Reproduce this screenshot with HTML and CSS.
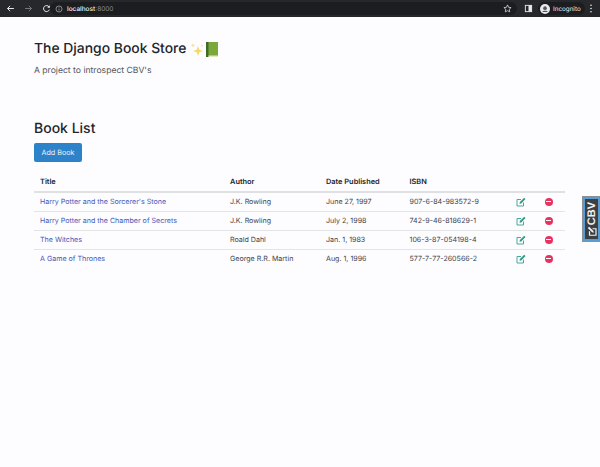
FILE: index.html
```html
<!DOCTYPE html>
<html lang="en">
<head>
<meta charset="utf-8">
<title>The Django Book Store</title>
<link rel="stylesheet" href="styles.css">
</head>
<body>
<header class="chrome">
  <div class="nav-icons">
    <svg class="ico" viewBox="0 0 12 12"><path d="M10.500 6H2M5.500 2.500 2 6l3.500 3.500" fill="none" stroke="#e8eaed" stroke-width="1.300"/></svg>
    <svg class="ico" viewBox="0 0 12 12"><path d="M1.500 6H10M6.500 2.500 10 6 6.500 9.500" fill="none" stroke="#77787b" stroke-width="1.300"/></svg>
    <svg class="ico" viewBox="0 0 12 12"><path d="M9.800 7.500A4 4 0 1 1 9.300 3.800" fill="none" stroke="#e8eaed" stroke-width="1.300"/><path d="M10.500 1.500v3.500H7z" fill="#e8eaed"/></svg>
  </div>
  <div class="omnibox">
    <svg class="info" viewBox="0 0 10 10"><circle cx="5" cy="5" r="3.800" fill="none" stroke="#c4c5c8" stroke-width=".8"/><path d="M5 4.500v2.500M5 3v.8" stroke="#c4c5c8" stroke-width=".8"/></svg>
    <span class="host">localhost</span><span class="port">:8000</span>
    <svg class="star" viewBox="0 0 10 10"><path d="M5 1l1.200 2.700 2.800.3-2.100 1.900.6 2.900L5 7.400 2.500 8.800l.6-2.900L1 4l2.800-.3z" fill="none" stroke="#d8d9dc" stroke-width=".9"/></svg>
  </div>
  <svg class="panel" viewBox="0 0 10 10"><rect x="1.500" y="1.500" width="7" height="7" fill="none" stroke="#e8eaed"/><rect x="5" y="1.500" width="3.500" height="7" fill="#e8eaed"/></svg>
  <div class="profile">
    <svg class="avatar" viewBox="0 0 12 12"><circle cx="6" cy="6" r="6" fill="#e8eaed"/><circle cx="6" cy="5" r="2.200" fill="#55575b"/><path d="M2.500 9.500c1-2 6-2 7 0z" fill="#55575b"/></svg>
    <span>Incognito</span>
  </div>
  <svg class="more" viewBox="0 0 4 12"><circle cx="2" cy="2.500" r=".9" fill="#e8eaed"/><circle cx="2" cy="6" r=".9" fill="#e8eaed"/><circle cx="2" cy="9.500" r=".9" fill="#e8eaed"/></svg>
</header>
<main class="page">
  <h1 class="site-title">The Django Book Store <svg class="emoji-svg" viewBox="0 0 28 15"><path d="M8 4l1.300 3.700 3.700 1.300-3.700 1.300L8 14l-1.300-3.700L3 9l3.700-1.300z" fill="#fcd75e"/><path d="M3 1l.6 1.700 1.700.6-1.700.6L3 5.600l-.6-1.700L.7 3.300l1.700-.6z" fill="#fbe08a"/><path d="M12 2l.4 1.200 1.200.4-1.200.4L12 5.200l-.4-1.200-1.200-.4 1.200-.4z" fill="#fbe08a"/><rect x="16" y="0" width="12" height="15" fill="#7aa83a"/><rect x="16" y="0" width="2.500" height="15" fill="#3f6b2a"/><rect x="18.500" y="13.500" width="9.500" height="1.500" fill="#e4e8c9"/></svg></h1>
  <p class="tagline">A project to introspect CBV's</p>
  <h2 class="list-title">Book List</h2>
  <a class="btn" href="#">Add Book</a>
  <table class="books">
    <thead>
      <tr><th class="c-title">Title</th><th class="c-author">Author</th><th class="c-date">Date Published</th><th class="c-isbn">ISBN</th><th class="c-edit"></th><th class="c-del"></th></tr>
    </thead>
    <tbody>
      <tr><td><a href="#">Harry Potter and the Sorcerer's Stone</a></td><td>J.K. Rowling</td><td>June 27, 1997</td><td>907-6-84-983572-9</td>
        <td><svg class="edit" viewBox="0 0 10 10"><use href="#edit-icon"/></svg></td><td><span class="del"></span></td></tr>
      <tr><td><a href="#">Harry Potter and the Chamber of Secrets</a></td><td>J.K. Rowling</td><td>July 2, 1998</td><td>742-9-46-818629-1</td>
        <td><svg class="edit" viewBox="0 0 10 10"><use href="#edit-icon"/></svg></td><td><span class="del"></span></td></tr>
      <tr><td><a href="#">The Witches</a></td><td>Roald Dahl</td><td>Jan. 1, 1983</td><td>106-3-87-054198-4</td>
        <td><svg class="edit" viewBox="0 0 10 10"><use href="#edit-icon"/></svg></td><td><span class="del"></span></td></tr>
      <tr><td><a href="#">A Game of Thrones</a></td><td>George R.R. Martin</td><td>Aug. 1, 1996</td><td>577-7-77-260566-2</td>
        <td><svg class="edit" viewBox="0 0 10 10"><use href="#edit-icon"/></svg></td><td><span class="del"></span></td></tr>
    </tbody>
  </table>
</main>
<aside class="cbv-tab"><span class="cbv-label"><svg class="cbv-mark" viewBox="0 0 10 10"><path d="M7.500 5.500V9H1V2.500h4" fill="none" stroke="#f1f2f3" stroke-width="1.200"/><path d="M3.500 6.800l.4-1.700L8.200.8l1.300 1.300L5.200 6.400z" fill="#f1f2f3"/></svg>CBV</span></aside>
<svg class="defs" width="0" height="0"><defs><g id="edit-icon"><path d="M7.500 5.500V9H1V2.500h4" fill="none" stroke="#4aa898" stroke-width="1"/><path d="M3.500 6.800l.4-1.700L8.200.8l1.300 1.300L5.200 6.400z" fill="#2f9a85"/></g></defs></svg>
</body>
</html>
```
FILE: styles.css
```css
* { box-sizing: border-box; }
html, body { margin: 0; padding: 0; }
body { width: 600px; height: 467px; overflow: hidden; background: #fdfcff; font-family: Inter, "Liberation Sans", sans-serif; color: #212529; position: relative; text-rendering: geometricPrecision; }
.chrome { height: 17px; background: #27282c; display: flex; align-items: center; color: #e8eaed; font-size: 6.5px; }
.nav-icons { display: flex; gap: 9px; padding-left: 6px; width: 50px; flex: none; }
.ico { width: 9px; height: 9px; flex: none; }
.omnibox { width: 467px; height: 13px; background: #1c1d21; border-radius: 7px; display: flex; align-items: center; padding: 0 5px; flex: none; }
.info { width: 8px; height: 8px; margin-right: 4px; }
.host { color: #f0f1f3; font-weight: 500; }
.port { color: #8d8e92; }
.star { width: 9px; height: 9px; margin-left: auto; }
.panel { width: 9px; height: 9px; margin-left: 7px; flex: none; }
.profile { display: flex; align-items: center; gap: 3px; margin-left: 5px; height: 13px; padding: 0 4px 0 2px; background: #1c1d21; border-radius: 7px; flex: none; font-size: 6.3px; }
.avatar { width: 10px; height: 10px; }
.more { width: 4px; height: 11px; margin-left: 4px; flex: none; }
.page { padding: 22px 34px 0; }
.site-title { margin: 0; font-size: 13.9px; line-height: 20px; font-weight: 500; color: #212529; display: flex; align-items: center; gap: 4px; }
.emoji-svg { width: 28px; height: 15px; display: block; flex: none; }
.tagline { margin: 6px 0 0; font-size: 8.6px; line-height: 12px; color: #53575b; }
.list-title { margin: 42px 0 0; font-size: 14px; line-height: 19px; font-weight: 500; color: #212529; }
.btn { display: block; width: 48px; height: 19px; margin-top: 5px; background: #2d83c9; border-radius: 2px; color: #e9f1f9; font-size: 7.2px; line-height: 19px; text-align: center; text-decoration: none; }
.books { margin-top: 10px; width: 531px; border-collapse: collapse; table-layout: fixed; font-size: 7.1px; }
.books th { text-align: left; font-weight: 600; font-size: 7.4px; color: #212529; padding: 0 6px; height: 20px; border-bottom: 2px solid #dfe0e2; }
.books td { padding: 0 6px; height: 19px; border-bottom: 1px solid #e3e4e6; color: #40444a; }
.books tbody tr:last-child td { border-bottom: 0; }
.books a { color: #4659b8; text-decoration: none; }
.c-title { width: 190px; }
.c-author { width: 96px; }
.c-date { width: 83.5px; }
.c-isbn { width: 106px; }
.c-edit { width: 29px; }
.edit { width: 10px; height: 10px; display: block; }
.del { display: block; width: 8px; height: 8px; border-radius: 50%; background: #e8325f; position: relative; }
.del::after { content: ""; position: absolute; left: 1.5px; right: 1.5px; top: 3.2px; height: 1.5px; background: #fff; }
.cbv-tab { position: absolute; left: 583px; top: 197px; width: 17px; height: 44px; background: #3c4043; border: 2px solid #5a9bd0; outline: 1px solid #8a9097; overflow: hidden; display: flex; align-items: center; justify-content: center; }
.cbv-label { writing-mode: vertical-rl; transform: rotate(180deg); font-family: "Liberation Sans", sans-serif; font-weight: 700; font-size: 11px; color: #f1f2f3; white-space: nowrap; display: flex; align-items: center; gap: 1px; }
.cbv-mark { width: 10px; height: 10px; transform: rotate(90deg); }
.defs { position: absolute; }
```
